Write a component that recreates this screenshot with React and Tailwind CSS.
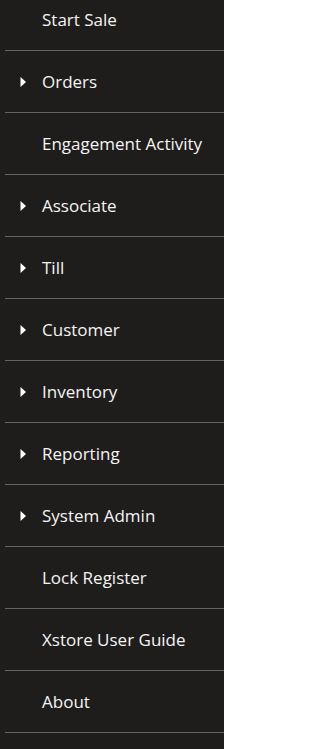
const items = [
  { label: "Start Sale" },
  { label: "Orders", sub: true },
  { label: "Engagement Activity" },
  { label: "Associate", sub: true },
  { label: "Till", sub: true },
  { label: "Customer", sub: true },
  { label: "Inventory", sub: true },
  { label: "Reporting", sub: true },
  { label: "System Admin", sub: true },
  { label: "Lock Register" },
  { label: "Xstore User Guide" },
  { label: "About" },
];

const Caret = () => (
  <svg width="6" height="10" viewBox="0 0 6 10" className="block">
    <path d="M0.5 0 L6 5 L0.5 10 Z" fill="#ffffff" />
  </svg>
);

export default function App() {
  return (
    <div className="w-[224px] h-[749px] overflow-hidden bg-[#1f1d1c] font-['Segoe_UI','Open_Sans',sans-serif]">
      <ul className="-mt-[11px]">
        {items.map((item) => (
          <li key={item.label} className="ml-[5px] border-b border-[#666462]">
            <div className="h-[61px] flex items-center">
              <div className="w-[37px] flex justify-end pr-[16px]">
                {item.sub && <Caret />}
              </div>
              <span className="text-[17px] text-[#f4f4f4]">{item.label}</span>
            </div>
          </li>
        ))}
      </ul>
    </div>
  );
}
